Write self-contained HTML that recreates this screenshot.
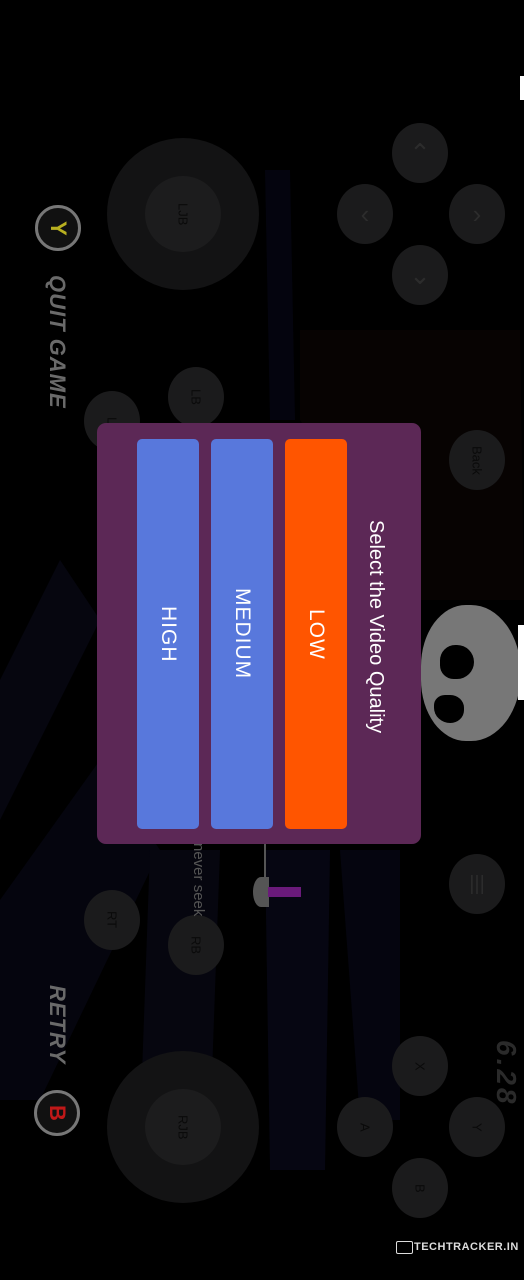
<!DOCTYPE html>
<html><head><meta charset="utf-8"><style>
html,body{margin:0;padding:0;background:#000;width:524px;height:1280px;overflow:hidden;position:relative;font-family:"Liberation Sans",sans-serif}
.a{position:absolute}
.c{position:absolute;border-radius:50%;background:#1b1b1c;display:flex;align-items:center;justify-content:center;color:#0a0a0a;font-size:13px}
.v{writing-mode:vertical-rl}
.btn{position:absolute;border-radius:5px;display:flex;align-items:center;justify-content:center;color:#fff;font-size:21px;writing-mode:vertical-rl;letter-spacing:1px}
.ar{color:#2c2c2c;font-size:26px}
</style></head><body>
<svg class="a" style="left:0;top:0" width="524" height="1280">
<polygon points="0,680 60,560 100,620 0,820" fill="#06060f"/>
<polygon points="0,900 100,760 160,850 40,1100 0,1100" fill="#05050e"/>
<polygon points="150,850 220,850 210,1130 140,1130" fill="#06060f"/>
<polygon points="265,850 330,850 325,1170 270,1170" fill="#060612"/>
<polygon points="340,850 400,850 400,1120 360,1120" fill="#05050f"/>
<polygon points="265,170 290,170 295,420 270,420" fill="#04040e"/>
<polygon points="300,330 520,330 524,600 420,600 300,420" fill="#070302"/>
</svg>
<div class="c" style="left:107px;top:138px;width:152px;height:152px;background:#131314"></div>
<div class="c v" style="left:145px;top:176px;width:76px;height:76px;background:#1c1c1d">LJB</div>
<div class="c ar" style="left:392px;top:123px;width:56px;height:60px">&#8963;</div>
<div class="c ar" style="left:337px;top:184px;width:56px;height:60px">&#8249;</div>
<div class="c ar" style="left:449px;top:184px;width:56px;height:60px">&#8250;</div>
<div class="c ar" style="left:392px;top:245px;width:56px;height:60px">&#8964;</div>
<div class="c v" style="left:168px;top:367px;width:56px;height:60px">LB</div>
<div class="c v" style="left:84px;top:391px;width:56px;height:60px">L</div>
<div class="c v" style="left:449px;top:430px;width:56px;height:60px">Back</div>
<div class="c" style="left:449px;top:854px;width:56px;height:60px;color:#2c2c2c;font-size:20px">|||</div>
<div class="c v" style="left:84px;top:890px;width:56px;height:60px">RT</div>
<div class="c v" style="left:168px;top:915px;width:56px;height:60px">RB</div>
<div class="c" style="left:107px;top:1051px;width:152px;height:152px;background:#131314"></div>
<div class="c v" style="left:145px;top:1089px;width:76px;height:76px;background:#1c1c1d">RJB</div>
<div class="c v" style="left:392px;top:1036px;width:56px;height:60px">X</div>
<div class="c v" style="left:337px;top:1097px;width:56px;height:60px">A</div>
<div class="c v" style="left:449px;top:1097px;width:56px;height:60px">Y</div>
<div class="c v" style="left:392px;top:1158px;width:56px;height:60px">B</div>
<div class="c v" style="left:35px;top:205px;width:40px;height:40px;border:3px solid #777;background:#111;color:#b8b020;font-size:22px;font-weight:bold">Y</div>
<div class="c v" style="left:34px;top:1090px;width:40px;height:40px;border:3px solid #777;background:#111;color:#c01818;font-size:22px;font-weight:bold">B</div>
<div class="a v" style="left:44px;top:275px;color:#6a6a6a;font-size:22px;font-weight:bold;font-style:italic;letter-spacing:1px">QUIT GAME</div>
<div class="a v" style="left:44px;top:985px;color:#6a6a6a;font-size:22px;font-weight:bold;font-style:italic;letter-spacing:1px">RETRY</div>
<div class="a v" style="left:490px;top:1040px;color:#2a2a2a;font-size:28px;font-weight:bold;font-style:italic;letter-spacing:3px">6.28</div>
<div class="a" style="left:421px;top:605px;width:100px;height:136px;background:#777;border-radius:45% 50% 50% 45%"></div>
<div class="a" style="left:440px;top:645px;width:34px;height:34px;background:#000;border-radius:45% 50% 50% 40%"></div>
<div class="a" style="left:434px;top:695px;width:30px;height:28px;background:#000;border-radius:40% 50% 50% 60%"></div>
<div class="a" style="left:518px;top:625px;width:6px;height:75px;background:#fff"></div>
<div class="a" style="left:520px;top:76px;width:4px;height:24px;background:#fff"></div>
<div class="a v" style="left:190px;top:843px;color:#555;font-size:15px">never seek</div>
<div class="a" style="left:264px;top:843px;width:2px;height:62px;background:#555"></div>
<div class="a" style="left:253px;top:877px;width:16px;height:30px;background:#555;border-radius:50% 0 0 50%"></div>
<div class="a" style="left:268px;top:887px;width:33px;height:10px;background:#6a1a7a"></div>
<div class="a" style="left:97px;top:423px;width:324px;height:421px;background:#5c2856;border-radius:9px"></div>
<div class="btn" style="left:137px;top:439px;width:62px;height:390px;background:#5878dc">HIGH</div>
<div class="btn" style="left:211px;top:439px;width:62px;height:390px;background:#5878dc">MEDIUM</div>
<div class="btn" style="left:285px;top:439px;width:62px;height:390px;background:#ff5500">LOW</div>
<div class="a v" style="left:364px;top:520px;color:#fff;font-size:20px">Select the Video Quality</div>
<div class="a" style="left:396px;top:1241px;width:15px;height:11px;border:1.5px solid #ddd;border-radius:2px"></div>
<div class="a" style="left:414px;top:1241px;color:#ddd;font-size:11px;font-weight:bold;letter-spacing:0.5px">TECHTRACKER.IN</div>
</body></html>
